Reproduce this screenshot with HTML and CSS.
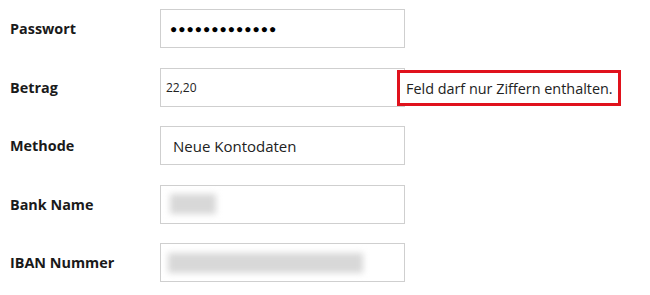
FILE: index.html
```html
<!DOCTYPE html>
<html lang="de">
<head>
    <meta charset="UTF-8">
    <meta name="viewport" content="width=device-width, initial-scale=1.0">
    <title>Auszahlung</title>
    <link rel="stylesheet" href="styles.css">
</head>
<body>

<form class="payout-form">
    <label for="passwort">Passwort</label>
    <div class="field">
        <div class="input password" id="passwort">&#9679;&#9679;&#9679;&#9679;&#9679;&#9679;&#9679;&#9679;&#9679;&#9679;&#9679;&#9679;&#9679;</div>
    </div>

    <label for="betrag">Betrag</label>
    <div class="field">
        <div class="input small" id="betrag">22,20</div>
        <div class="error">Feld darf nur Ziffern enthalten.</div>
    </div>

    <label for="methode">Methode</label>
    <div class="field">
        <div class="input select" id="methode">Neue Kontodaten</div>
    </div>

    <label for="bank">Bank Name</label>
    <div class="field">
        <div class="input" id="bank"><span class="blurred short"></span></div>
    </div>

    <label for="iban">IBAN Nummer</label>
    <div class="field">
        <div class="input" id="iban"><span class="blurred long"></span></div>
    </div>
</form>

</body>
</html>
```

FILE: styles.css
```css
body {
    margin: 0;
    padding: 0;
    background-color: #fff;
    color: #222;
    font-family: 'Open Sans', 'Noto Sans', sans-serif;
}

.payout-form {
    display: grid;
    grid-template-columns: 150px 1fr;
    grid-auto-rows: 39px;
    row-gap: 19.5px;
    padding: 9px 0 0 10px;
}

label {
    display: flex;
    align-items: center;
    font-weight: bold;
    font-size: 14.4px;
    color: #1a1a1a;
}

.field {
    display: flex;
    align-items: center;
}

.input {
    width: 245px;
    height: 39px;
    box-sizing: border-box;
    border: 1px solid #cfcfcf;
    background-color: #fff;
    display: flex;
    align-items: center;
    padding-left: 7px;
    font-size: 15px;
    color: #222;
}

.password {
    padding-left: 9px;
    font-size: 12px;
    letter-spacing: 1px;
    color: #000;
}

.small {
    padding-left: 5px;
    font-size: 12px;
}

.select {
    padding-left: 12px;
    font-size: 15px;
}

.blurred {
    display: block;
    height: 20px;
    background-color: #d8d8d8;
    filter: blur(3px);
}

.blurred.short {
    width: 46px;
    margin-left: 2px;
}

.blurred.long {
    width: 195px;
}

.error {
    margin-left: -8px;
    margin-top: 2px;
    height: 36px;
    box-sizing: border-box;
    border: 3px solid #e0121c;
    padding: 0 5px 0 6px;
    display: flex;
    align-items: center;
    font-size: 14.4px;
    color: #222;
    background-color: #fff;
}
```
